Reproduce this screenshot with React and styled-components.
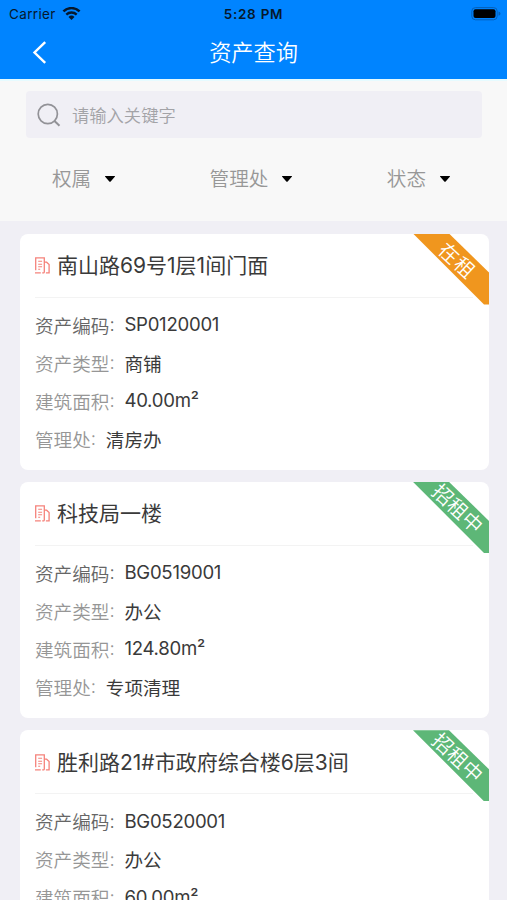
import styled, { createGlobalStyle } from "styled-components";

const GlobalStyle = createGlobalStyle`
  * {
    box-sizing: border-box;
  }

  body {
    margin: 0;
    background-color: #f0eff5;
    font-family: Inter, "Noto Sans CJK SC", sans-serif;
  }
`;

const Screen = styled.div`
  width: 507px;
  height: 900px;
  overflow: hidden;
  background-color: #f0eff5;
`;

const Header = styled.header`
  height: 79px;
  background-color: #0084ff;
`;

const StatusBar = styled.div`
  display: grid;
  grid-template-columns: 1fr auto 1fr;
  align-items: center;
  height: 27px;
  padding: 0 6px 0 9px;
  font-size: 13.5px;
  color: #06182c;
`;

const Carrier = styled.div`
  display: flex;
  align-items: center;
  gap: 6px;
  letter-spacing: 0.35px;
`;

const Time = styled.div`
  margin-right: 3px;
  font-weight: 600;
  letter-spacing: 0.75px;
`;

const BatteryIcon = styled.svg`
  justify-self: end;
`;

const NavBar = styled.div`
  display: grid;
  grid-template-columns: 60px 1fr 60px;
  align-items: center;
  height: 50px;
`;

const BackIcon = styled.svg`
  margin-left: 32px;
`;

const PageTitle = styled.h1`
  margin: 0;
  padding-top: 1px;
  font-size: 22.2px;
  font-weight: 350;
  line-height: 30px;
  text-align: center;
  color: #fff;
`;

const Filters = styled.section`
  height: 142px;
  padding: 10px 25px 0 26px;
  border-top: 2px solid #e6fbff;
  background-color: #f8f8f8;
`;

const SearchBox = styled.div`
  display: flex;
  align-items: center;
  gap: 11px;
  height: 47px;
  padding-left: 11px;
  border-radius: 4px;
  background-color: #f0eff5;
  font-size: 17.3px;
  font-weight: 350;
  color: #a3a3a7;
`;

const FilterRow = styled.div`
  display: flex;
  justify-content: space-between;
  padding: 25px 31px 0 26px;
`;

const FilterItem = styled.div`
  display: flex;
  align-items: center;
  gap: 13px;
  font-size: 19.6px;
  font-weight: 350;
  line-height: 32px;
  color: #979797;
`;

const CardList = styled.main`
  display: flex;
  flex-direction: column;
  gap: 12.4px;
  padding: 12.5px 18px 0 20px;
`;

const Card = styled.article`
  position: relative;
  flex-shrink: 0;
  height: 236px;
  padding: 0 16px 0 15px;
  border-radius: 8px;
  overflow: hidden;
  background-color: #fff;
`;

const CardHeader = styled.div`
  display: flex;
  align-items: center;
  gap: 7px;
  height: 64px;
  margin-bottom: 7.5px;
  padding-top: 1px;
  border-bottom: 1px solid #f3f3f3;
`;

const CardTitle = styled.h2`
  margin: 0;
  padding-top: 1px;
  font-size: 21px;
  font-weight: 400;
  line-height: 30px;
  color: #3a3a3a;
  white-space: nowrap;
`;

const Row = styled.div`
  display: flex;
  align-items: center;
  height: 38px;
  font-size: 18.6px;
`;

const Label = styled.span`
  font-weight: 350;
  color: ${({ $dark }) => ($dark ? "#666" : "#969696")};
`;

const Colon = styled(Label)`
  width: 15px;
`;

const Value = styled.span`
  font-weight: 400;
  letter-spacing: ${({ $latin }) => ($latin ? "-0.27px" : "0")};
  color: #3a3a3a;
`;

const Ribbon = styled.div`
  position: absolute;
  top: 0;
  right: 0;
  display: flex;
  align-items: center;
  justify-content: center;
  width: 76px;
  height: 71px;
  background-color: ${({ $color }) => $color};
  clip-path: polygon(0 0, 36px 0, 100% 39px, 100% 100%, 71px 100%);
`;

const RibbonText = styled.span`
  flex-shrink: 0;
  font-size: 20px;
  font-weight: 350;
  line-height: 24px;
  letter-spacing: ${({ $spacing }) => $spacing || "0.3px"};
  white-space: nowrap;
  color: #fff;
  transform: translate(6px, -8px) rotate(43deg);
`;

const assets = [
  {
    title: "南山路69号1层1间门面",
    status: "在租",
    color: "#f0961e",
    spacing: "1px",
    rows: [
      ["资产编码", "SP0120001"],
      ["资产类型", "商铺"],
      ["建筑面积", "40.00m²"],
      ["管理处", "清房办"],
    ],
  },
  {
    title: "科技局一楼",
    status: "招租中",
    color: "#5db777",
    rows: [
      ["资产编码", "BG0519001"],
      ["资产类型", "办公"],
      ["建筑面积", "124.80m²"],
      ["管理处", "专项清理"],
    ],
  },
  {
    title: "胜利路21#市政府综合楼6层3间",
    status: "招租中",
    color: "#5db777",
    rows: [
      ["资产编码", "BG0520001"],
      ["资产类型", "办公"],
      ["建筑面积", "60.00m²"],
      ["管理处", "专项清理"],
    ],
  },
];

const WifiIcon = () => (
  <svg width="19" height="14" viewBox="0 0 19 14" fill="none">
    <path d="M1.4 4.4a11.6 11.6 0 0 1 16.2 0" stroke="#06182c" strokeWidth="2.5" />
    <path d="M4.3 7.6a7.5 7.5 0 0 1 10.4 0" stroke="#06182c" strokeWidth="2.3" />
    <path d="M6.5 10a4.3 4.3 0 0 1 6 0l-3 3z" fill="#06182c" />
  </svg>
);

const SearchIcon = () => (
  <svg width="24" height="24" viewBox="0 0 24 24" fill="none" stroke="#929297" strokeWidth="1.7">
    <circle cx="10.8" cy="11" r="9.6" />
    <path d="M17.5 18l5 4.8" strokeWidth="2" />
  </svg>
);

const CaretIcon = () => (
  <svg width="12" height="6" viewBox="0 0 12 6">
    <path d="M1.4 0h9.2q.8 0 .2.7L6.7 5.5q-.7.7-1.4 0L1.2.7Q.6 0 1.4 0z" fill="#000" />
  </svg>
);

const BuildingIcon = () => (
  <svg width="15" height="17" viewBox="0 0 15 17" fill="none" stroke="#f5827b" strokeWidth="1.3">
    <path d="M0 15.8h5.8M.7 13.2V.9h8.6v14.9M7.2 15.8h2.1M9.3 5.2h2.3l2.5 2.4v8.2h-3.2" />
    <path d="M3.2 4.2h3.9M3.2 7.2h3.9M3.2 9.8h3.9M3.2 12.3h2" strokeWidth="1.1" />
  </svg>
);

const App = () => {
  return (
    <>
      <GlobalStyle />
      <Screen>
        <Header>
          <StatusBar>
            <Carrier>
              Carrier
              <WifiIcon />
            </Carrier>
            <Time>5:28 PM</Time>
            <BatteryIcon width="30" height="14" viewBox="0 0 30 14">
              <rect x="0.8" y="0.6" width="25.4" height="12.2" rx="3.6" fill="none" stroke="#0560b8" />
              <rect x="2.5" y="2.3" width="22" height="8.8" rx="2" fill="#000" />
              <path d="M27.5 4.6q2 .6 2 2.1t-2 2.1z" fill="#0560b8" />
            </BatteryIcon>
          </StatusBar>
          <NavBar>
            <BackIcon width="15" height="23" viewBox="0 0 15 23" fill="none">
              <path d="M13.2 1.2L2.5 11.5l10.7 10.3" stroke="#fff" strokeWidth="2.4" />
            </BackIcon>
            <PageTitle>资产查询</PageTitle>
          </NavBar>
        </Header>
        <Filters>
          <SearchBox>
            <SearchIcon />
            请输入关键字
          </SearchBox>
          <FilterRow>
            {["权属", "管理处", "状态"].map((name) => (
              <FilterItem key={name}>
                {name}
                <CaretIcon />
              </FilterItem>
            ))}
          </FilterRow>
        </Filters>
        <CardList>
          {assets.map(({ title, status, color, spacing, rows }) => (
            <Card key={title}>
              <CardHeader>
                <BuildingIcon />
                <CardTitle>{title}</CardTitle>
              </CardHeader>
              {rows.map(([label, value], index) => (
                <Row key={label}>
                  <Label $dark={index === 0}>{label}</Label>
                  <Colon $dark={index === 0}>:</Colon>
                  <Value $latin={/\d/.test(value)}>{value}</Value>
                </Row>
              ))}
              <Ribbon $color={color}>
                <RibbonText $spacing={spacing}>{status}</RibbonText>
              </Ribbon>
            </Card>
          ))}
        </CardList>
      </Screen>
    </>
  );
};

export default App;
